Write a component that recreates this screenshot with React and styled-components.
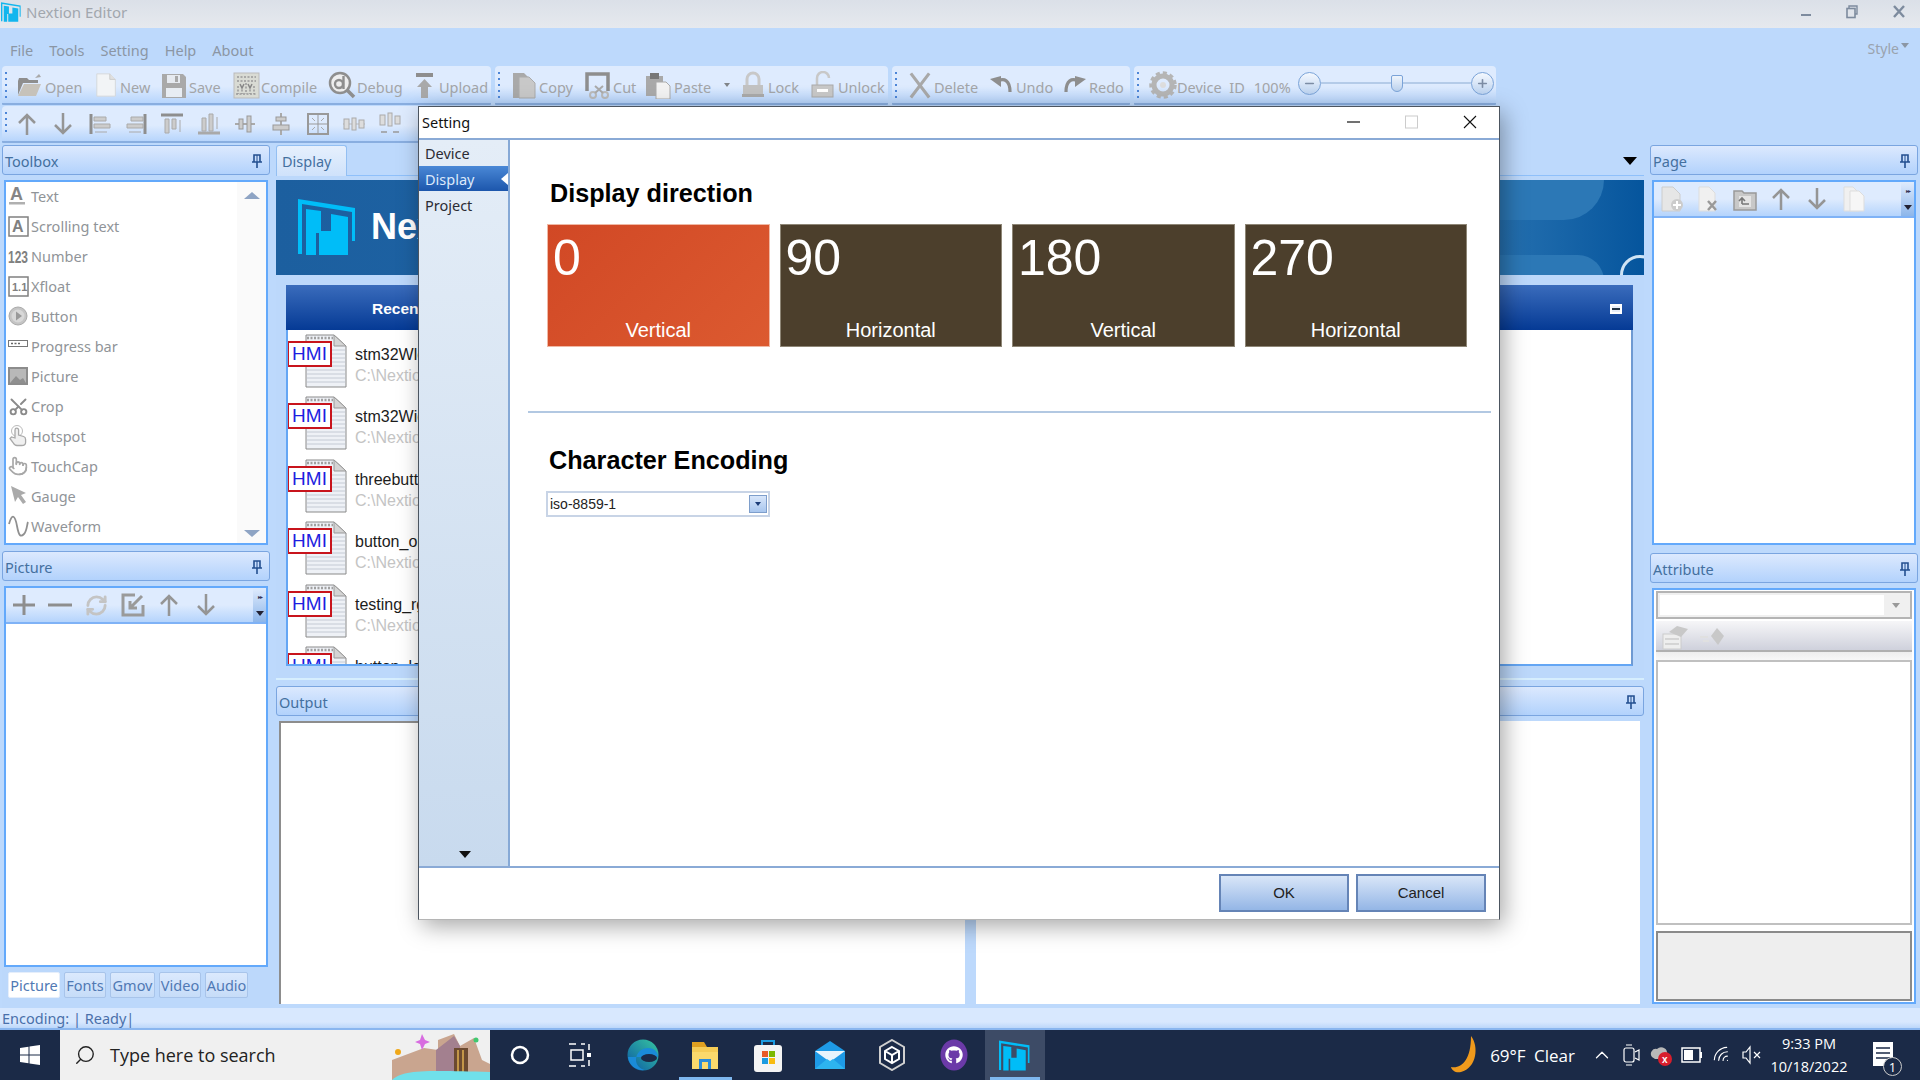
import React from 'react';
import styled, { createGlobalStyle } from 'styled-components';
import { Scissors, Pointer, RefreshCw, Minus, Plus, ChevronUp, Wifi, Search } from 'lucide-react';
import { FaGithub } from 'react-icons/fa';

const Global = createGlobalStyle`
  html, body { margin: 0; padding: 0; background: #bdd9fc; }
  * { box-sizing: border-box; }
`;

const UI = `"Noto Sans", "Liberation Sans", sans-serif`;
const ARIAL = `"Liberation Sans", Arial, sans-serif`;
const GREY = '#a3a5a8';

const Root = styled.div`
  position: relative; width: 1920px; height: 1080px; overflow: hidden;
  display: flex; flex-direction: column; background: #bdd9fc; font-family: ${UI};
`;
const TitleBar = styled.div`
  height: 28px; flex: none; display: flex; align-items: center; padding: 0 0 5px 1px;
  background: linear-gradient(#dbe0e8, #e6e9ee); color: #a2a7ae; font-size: 15px;
`;
const TitleText = styled.span` margin-left: 5px; flex: 1; `;
const WinControls = styled.div` display: flex; gap: 35px; padding-right: 15px; align-items: center; color: #7d8b9e; `;
const MenuBar = styled.div`
  height: 37px; flex: none; display: flex; align-items: center; padding: 6px 11px 0 10px; gap: 16px;
  color: #8b96a4; font-size: 14.5px;
`;
const StyleMenu = styled.span`
  margin-left: auto; margin-top: -2px; display: flex; gap: 2px; color: #9aa3ae; font-size: 14px;
  &::after { content: ''; margin-top: 4px; border: 4px solid transparent; border-top: 5px solid #8b96a4; border-bottom: 0; }
`;
const ToolRow = styled.div`
  height: ${p => p.$h}px; flex: none; display: flex; gap: 4px; padding: ${p => p.$pad} 0 0 2px;
`;
const Group = styled.div`
  width: ${p => p.$w}px; height: 100%; position: relative; display: flex; align-items: center;
  padding-left: ${p => p.$pl}px; border-radius: 4px 4px 1px 1px; border-bottom: 2px solid #89aee0;
  background: linear-gradient(#deebfe 0%, #deebfe 55%, #b7d5fc 100%);
  color: ${GREY}; font-size: 14.5px;
  &::before {
    content: ''; position: absolute; left: 3px; top: 6px; bottom: 5px; width: 2px;
    background: repeating-linear-gradient(#4d86d8 0 2px, transparent 2px 6px);
  }
`;
const ToolItem = styled.div`
  width: ${p => p.$w}px; flex: none; display: flex; align-items: center;
`;
const ToolIcon = styled.div` width: ${p => p.$w}px; flex: none; display: flex; `;
const ToolLabel = styled.span` margin-top: 4px; margin-left: ${p => p.$ml || 0}px; white-space: nowrap; `;
const Caret = styled.span`
  margin: 0 0 0 13px; border: 3.5px solid transparent; border-top: 4px solid #808488; border-bottom: 0;
`;
const SliderWrap = styled.div` display: flex; align-items: center; margin-left: 7px; width: 196px; margin-top: -3px; `;
const ZoomBtn = styled.div`
  width: 23px; height: 23px; flex: none; border-radius: 50%; border: 1.5px solid #7aa3d8;
  background: linear-gradient(#f4f8fe, #bcd3f0); color: #7c8ca4; display: flex; align-items: center; justify-content: center;
`;
const Track = styled.div` flex: 1; height: 2px; background: #b4cbe8; display: flex; justify-content: center; align-items: center; `;
const Thumb = styled.div`
  width: 12px; height: 17px; margin-left: 2px; background: linear-gradient(#eef4fc, #bcd2ee);
  border: 1.5px solid #7aa3d8; border-radius: 2px 2px 6px 6px;
`;
const RowIcon = styled.div` width: 36.3px; flex: none; display: flex; justify-content: center; `;

const Body = styled.div` height: 865px; flex: none; display: flex; padding: 2px 0 0 2px; `;
const LeftCol = styled.div` width: 268px; flex: none; display: flex; flex-direction: column; `;
const CenterCol = styled.div` width: 1368px; margin-left: 6px; flex: none; display: flex; flex-direction: column; `;
const RightCol = styled.div` width: 268px; margin-left: 6px; flex: none; display: flex; flex-direction: column; `;

const PaneHeader = styled.div`
  height: 30px; flex: none; display: flex; align-items: center; justify-content: space-between;
  padding: 2px 7px 0 2px; border: 1px solid #7aa5e0; border-radius: 3px; margin-top: ${p => p.$mt || 0}px;
  background: linear-gradient(#dce9fe, #b2d2fc); color: #44709f; font-size: 14.5px;
`;
const PanelBox = styled.div`
  height: ${p => p.$h}px; margin: ${p => p.$mt ?? 5}px 2px 0 2px; flex: none; background: #fff;
  border: 2px solid #63a9fb; display: flex; flex-direction: column; overflow: hidden; position: relative;
`;
const ToolList = styled.div` flex: 1; margin-top: -1px; `;
const ListRow = styled.div`
  height: 30px; display: flex; align-items: center; padding-left: 2px; color: #909498; font-size: 14.5px;
`;
const ListIcon = styled.div` width: 23px; flex: none; display: flex; `;
const ScrollRail = styled.div`
  position: absolute; right: 0; top: 0; bottom: 0; width: 29px; background: #fafafa;
  display: flex; flex-direction: column; justify-content: space-between; align-items: center; padding: 10px 0 6px;
`;
const ArrowUp = styled.span` border: 8px solid transparent; border-bottom: 7px solid #8ea4c4; border-top: 0; `;
const ArrowDown = styled.span` border: 8px solid transparent; border-top: 7px solid #8ea4c4; border-bottom: 0; `;
const PaneToolbar = styled.div`
  height: 36px; flex: none; display: flex; align-items: center; padding-left: ${p => p.$pl}px; position: relative;
  background: linear-gradient(#deebfe 0%, #deebfe 50%, #b5d4fc 100%);
  border-bottom: 2px solid #7fb2f6;
`;
const PaneTool = styled.div` width: 36.3px; flex: none; display: flex; justify-content: center; `;
const Overflow = styled.div`
  position: absolute; right: 0; top: 0; bottom: 0; width: 13px;
  background: linear-gradient(#dfebfd, #8db6ea); display: flex; flex-direction: column; align-items: center; justify-content: space-around;
  &::before { content: '▸▸'; font-size: 6px; color: #335; letter-spacing: -1px; line-height: 6px; }
  &::after { content: ''; border: 4px solid transparent; border-top: 5px solid #223; border-bottom: 0; }
`;
const TabBar = styled.div` flex: 1; display: flex; gap: 4px; padding: 5px 0 0 6px; background: #bcd8fb; `;
const BottomTab = styled.div`
  width: ${p => p.$w}px; height: 26px; display: flex; align-items: center; justify-content: center;
  background: ${p => (p.$on ? '#fff' : 'linear-gradient(#dbe9fd, #c6dcf8)')};
  border: 1px solid ${p => (p.$on ? '#e5eefb' : '#a8c4ea')}; border-radius: 2px; color: #5079b4; font-size: 14.5px;
`;

const TabStrip = styled.div` height: 31px; flex: none; display: flex; justify-content: space-between; border-bottom: 1px solid #8fc0fa; `;
const DocTab = styled.div`
  width: 71px; height: 31px; background: linear-gradient(#e6f0fd, #cfe2fb); border: 1px solid #93bff2;
  border-bottom: 0; border-radius: 3px 3px 0 0; color: #44709f; font-size: 14.5px; display: flex; align-items: center; padding-left: 5px;
`;
const StripArrow = styled.span`
  margin: 12px 7px 0 0; height: 0; border: 7px solid transparent; border-top: 8px solid #000; border-bottom: 0;
`;
const DocPanel = styled.div`
  height: 504px; flex: none; display: flex; flex-direction: column; padding-top: 4px;
  background: #bcd8fb; border-bottom: 2px solid #d6eefe;
`;
const Banner = styled.div`
  height: 95px; flex: none; position: relative; overflow: hidden; display: flex; align-items: center; padding: 0 0 2px 22px;
  background: linear-gradient(90deg, #1c5f9f 0%, #2068ab 50%, #2a74b2 88%, #05559d 100%);
`;
const BannerTitle = styled.span` margin-left: 15px; color: #fff; font: bold 36px ${ARIAL}; `;
const BannerWave = styled.div`
  position: absolute; right: 40px; top: -30px; width: 240px; height: 70px; border-radius: 0 0 40px 0; background: #2c78b6;
`;
const BannerWave2 = styled.div`
  position: absolute; right: 40px; bottom: -30px; width: 240px; height: 50px; border-radius: 0 26px 0 0; background: #2c78b6;
`;
const BannerArc = styled.div`
  position: absolute; right: -16px; bottom: -20px; width: 40px; height: 40px; border-radius: 50%; border: 3px solid #cfe4f5;
`;
const RecentPanel = styled.div`
  height: 381px; margin: 10px 11px 0 10px; flex: none; display: flex; flex-direction: column;
`;
const RecentHead = styled.div`
  height: 45px; flex: none; display: flex; align-items: center; justify-content: space-between; padding: 2px 11px 0 86px;
  background: linear-gradient(#3a6cbc, #053a95); color: #fff; font: bold 15.5px ${ARIAL};
`;
const Collapse = styled.span`
  width: 12px; height: 10px; background: #e8eef8; border: 2px solid #fff;
  display: flex; align-items: center;
  &::after { content: ''; width: 100%; height: 2px; background: #234; }
`;
const RecentList = styled.div`
  flex: 1; background: #fff; overflow: hidden; border: 2px solid #64a6f4; border-top: 0; border-right-color: #6f9ad2;
`;
const FileRow = styled.div` height: 62.4px; display: flex; padding: 4px 0 0 0; position: relative; `;
const DocWrap = styled.span` margin-left: 17px; display: flex; `;
const HmiBadge = styled.span`
  position: absolute; left: -1px; top: 11px; width: 45px; height: 26px; background: #fff; border: 2.5px solid #c8141c;
  color: #1e1ee0; font: 19px ${ARIAL}; display: flex; align-items: center; justify-content: center;
`;
const FileText = styled.div` margin-left: 8px; display: flex; flex-direction: column; gap: 3px; padding-top: 12px; font: 16px ${ARIAL}; white-space: nowrap; `;
const FileName = styled.span` color: #1c1c1c; `;
const FilePath = styled.span` color: #c4c4c4; `;
const OutputBoxes = styled.div` height: 283px; margin: 5px 0 0 3px; flex: none; display: flex; gap: 11px; `;
const OutputBox = styled.div`
  width: ${p => p.$w}px; background: #fff; border: solid #8d8d8d; border-width: ${p => (p.$first ? '2px 0 0 2px' : '0')};
`;
const Combo = styled.div`
  height: 28px; margin: 1px 2px 0; flex: none; border: 2px solid #b4b4b4; background: #f0f0f0; display: flex; align-items: center; padding: 2px;
`;
const ComboField = styled.div` flex: 1; height: 100%; background: #fff; `;
const ComboBtn = styled.div`
  width: 24px; display: flex; justify-content: center;
  &::after { content: ''; border: 4px solid transparent; border-top: 5px solid #999; border-bottom: 0; }
`;
const GreyBar = styled.div`
  height: 31px; margin: 2px 2px 0; flex: none; display: flex; align-items: center; gap: 8px; padding: 3px 0 0 5px;
  background: linear-gradient(#f6f6f8, #cfd1dc); border-bottom: 2px solid #b0b0b0;
`;
const GreyBand = styled.div` height: 8px; flex: none; margin: 0 2px; background: linear-gradient(#eee, #f8f8f8); `;
const PropBox = styled.div` height: 265px; margin: 0 2px; flex: none; background: #fff; border: 2px solid #c0c0c0; `;
const DescBox = styled.div` flex: 1; margin: 6px 2px 1px; background: #eee; border: 2px solid #8a8a8a; `;
const StatusBar = styled.div`
  height: 22px; flex: none; display: flex; align-items: center; padding-left: 2px; color: #4a70aa; font-size: 14.5px;
  background: linear-gradient(#d8e8fe, #d8e8fe 70%, #bcd7fa); border-bottom: 2px solid #8ab6ef;
`;

const Taskbar = styled.div`
  flex: 1; display: flex; align-items: stretch; background: #1b2a47; color: #fff; font-family: "Open Sans", ${UI};
`;
const StartBtn = styled.div` width: 60px; display: flex; align-items: center; justify-content: center; `;
const SearchBox = styled.div`
  width: 430px; display: flex; align-items: center; padding-left: 14px; background: #f0f0f0; color: #222; font-size: 18px; position: relative; overflow: hidden;
`;
const SearchText = styled.span` margin-left: 14px; `;
const SearchArt = styled.div` position: absolute; right: 0; top: 0; bottom: 0; width: 98px; display: flex; `;
const TaskIcon = styled.div`
  width: ${p => p.$w}px; flex: none; display: flex; align-items: center; justify-content: center; position: relative;
  background: ${p => (p.$active ? '#3d4b66' : 'transparent')};
  ${p => p.$underline && `&::after { content:''; position:absolute; left:5px; right:5px; bottom:0; height:3px; background:#7fb8ef; }`}
`;
const TaskIcons = styled.div` display: flex; `;
const Tray = styled.div` margin-left: auto; display: flex; align-items: center; `;
const Weather = styled.span` margin: 0 12px 0 9px; font-size: 17px; word-spacing: 4px; white-space: nowrap; `;
const TrayIcon = styled.div` width: 30px; flex: none; display: flex; justify-content: center; align-items: center; `;
const Clock = styled.div` width: 84px; display: flex; flex-direction: column; align-items: center; gap: 4px; font-size: 14.5px; line-height: 19px; `;
const Notify = styled.div` width: 46px; margin-left: 9px; margin-right: 14px; display: flex; justify-content: center; position: relative; `;
const NotifyCount = styled.span`
  position: absolute; right: 4px; bottom: -8px; width: 19px; height: 19px; border-radius: 50%; background: #1b2a47; border: 1px solid #ccc;
  font-size: 13px; display: flex; align-items: center; justify-content: center;
`;

const Dialog = styled.div`
  position: absolute; left: 418px; top: 106px; width: 1082px; height: 814px; background: #fff;
  border: 1px solid #4c5560; border-bottom-color: #b5b5b5; box-shadow: 4px 6px 22px rgba(0,0,0,.35); display: flex; flex-direction: column;
  font-family: ${ARIAL};
`;
const DlgTitle = styled.div`
  height: 33px; flex: none; display: flex; align-items: center; justify-content: space-between; padding: 0 22px 2px 3px;
  border-bottom: 2px solid #8aaad6; font: 14.5px ${UI}; color: #111;
`;
const DlgBtns = styled.div` display: flex; align-items: center; gap: 45px; color: #111; `;
const DlgMain = styled.div` flex: 1; display: flex; min-height: 0; `;
const Nav = styled.nav`
  width: 91px; flex: none; display: flex; flex-direction: column; position: relative;
  background: linear-gradient(#e4edf7, #c8daee); border-right: 2px solid #86a9d6; font: 14.5px ${UI}; color: #2c2c34;
`;
const NavItem = styled.div`
  height: ${p => p.$h}px; display: flex; align-items: center; padding-left: 6px; position: relative;
  ${p => p.$on && `
    color: #dce9fb; background: linear-gradient(#4a88d6, #1c56ac);
    &::after { content:''; position:absolute; right:0; top:7px; border: 6px solid transparent; border-right: 7px solid #fff; border-left: 0; }
  `}
`;
const NavMore = styled.span`
  position: absolute; left: 40px; bottom: 8px; border: 6px solid transparent; border-top: 7px solid #111; border-bottom: 0;
`;
const DlgContent = styled.div` flex: 1; display: flex; flex-direction: column; padding: 0 8px 0 18px; `;
const Heading = styled.h2`
  margin: ${p => p.$mt}px 0 0 ${p => p.$ml}px; font: bold 25.2px/32px ${ARIAL}; color: #000;
`;
const Tiles = styled.div` display: flex; gap: 10px; margin: 15px 0 0 19px; `;
const Tile = styled.div`
  width: 222.5px; height: 123px; display: flex; flex-direction: column; justify-content: space-between; color: #fff;
  padding: 5px 0 3px 0;
  background: ${p => (p.$on ? 'linear-gradient(135deg, #d14825, #dc5a30)' : '#4c3f2c')};
  border: 1px solid ${p => (p.$on ? '#f0b8a4' : '#8e8676')};
`;
const TileNum = styled.span` font: 50px/56px ${ARIAL}; padding-left: 5px; `;
const TileLabel = styled.span` font: 20px/26px ${ARIAL}; text-align: center; `;
const Divider = styled.div` height: 2px; margin: 64px 0 0 0; background: #b2c8e2; `;
const Select = styled.div`
  width: 224px; height: 26px; margin: 15px 0 0 18px; display: flex; align-items: center; justify-content: space-between;
  border: 2px solid #c8d4e6; padding-left: 2px; color: #222; font: 14px ${ARIAL}; background: #fff;
`;
const SelectBtn = styled.span`
  width: 18px; height: 18px; margin-right: 1px; background: linear-gradient(#d8e6fa, #a8c6ee); border: 1px solid #7e9ecb;
  display: flex; align-items: center; justify-content: center;
  &::after { content:''; border: 3.5px solid transparent; border-top: 4px solid #1c3c78; border-bottom: 0; }
`;
const DlgFooter = styled.div`
  height: 53px; flex: none; display: flex; justify-content: flex-end; align-items: center; gap: 7px; padding: 0 13px 2px 0;
  border-top: 2px solid #8aaad6; background: #fff;
`;
const DlgButton = styled.div`
  width: 130px; height: 38px; display: flex; align-items: center; justify-content: center; color: #222; font: 15px ${ARIAL};
  background: linear-gradient(#d9e6f8, #94b6e6); border: 2px solid #6584b6;
`;

/* ---------- drawings ---------- */
const Svg = ({ s = 28, w, h, children, vb }) => (
  <svg width={w || s} height={h || s} viewBox={vb || `0 0 ${w || s} ${h || s}`} fill="none">{children}</svg>
);
const g = '#a9a9a9';
const d = '#8e8e8e';

const tb = {
  open: <Svg><path d="M3 10l1-3h8l2 2h9v3H8L3 24z" fill={d}/><path d="M3 25l6-12h17l-5 12z" fill="#c6c2ba"/><path d="M20 7l4-4 2 3z" fill={g}/></Svg>,
  new: <Svg><path d="M3 2h14l6 6v18H3z" fill="#f2f4f6" stroke="#d4d7da"/><path d="M17 2v6h6" stroke="#ccc" fill="#e0e0e0"/></Svg>,
  save: <Svg><path d="M2 3h21l3 3v21H2z" fill={g}/><rect x="7" y="4" width="13" height="8" fill="#e6eaf0"/><rect x="15" y="5" width="3" height="6" fill={g}/><rect x="6" y="17" width="16" height="9" fill="#e8edf3"/></Svg>,
  compile: <Svg><rect x="2" y="2" width="25" height="25" fill="#d9dbd4" stroke="#bbb"/><path d="M5 6h19M5 10h19M6 15v8M10 15v8M14 12v11M18 15v8M22 15v8M4 23h21" stroke="#999" strokeDasharray="2 1.5" strokeWidth="1.5"/><path d="M8 13l2 4 2-4M16 13l2 4 2-4" stroke="#888" strokeWidth="1.5"/></Svg>,
  debug: <Svg><circle cx="12" cy="12" r="10" fill="#eee" stroke={d} strokeWidth="2.5"/><circle cx="11" cy="13" r="4" stroke={d} strokeWidth="2.4"/><path d="M15.5 5v13" stroke={d} strokeWidth="2.4"/><path d="M19 19l7 7" stroke={d} strokeWidth="3.5"/></Svg>,
  upload: <Svg w={22} h={28}><rect x="1" y="2" width="17" height="4" fill={d}/><path d="M9.5 8L2 16h4v11h7V16h4z" fill={g}/></Svg>,
  copy: <Svg><path d="M2 2h11l4 4v21H2z" fill={g}/><path d="M8 6h10l6 6v15H8z" fill="#c8c8c8" stroke="#aaa"/></Svg>,
  cut: <Svg><path d="M3 20V3h21v17" stroke={d} strokeWidth="3.5"/><circle cx="9" cy="24" r="3" stroke="#bbb" strokeWidth="2"/><circle cx="21" cy="24" r="3" stroke="#bbb" strokeWidth="2"/><path d="M11 22l8-7M19 22l-8-7" stroke="#aaa" strokeWidth="2"/></Svg>,
  paste: <Svg><rect x="1" y="5" width="17" height="20" fill={g}/><rect x="5" y="2" width="9" height="6" fill="#777"/><path d="M11 11h10l4 4v13H11z" fill="#f2f2f2" stroke="#aaa"/></Svg>,
  lock: <Svg><path d="M7 14V8a6 6 0 0 1 12 0v6" stroke="#c8c8c8" strokeWidth="3"/><rect x="3" y="14" width="20" height="10" fill="#c2c2c2"/><rect x="2" y="23" width="22" height="3" fill="#aaa"/></Svg>,
  unlock: <Svg><path d="M7 14V7a6 6 0 0 1 12 0" stroke="#c8c8c8" strokeWidth="2.5"/><rect x="2" y="14" width="21" height="12" fill="#c8c8c8" stroke="#aaa"/><rect x="7" y="18" width="11" height="3" fill="#fff"/></Svg>,
  del: <Svg><path d="M4 2l19 25M23 2L4 27" stroke="#a8a8a8" strokeWidth="3.2"/></Svg>,
  undo: <Svg w={24} h={24}><path d="M9 8c6-3 12-1 12 11" stroke={d} strokeWidth="3.2"/><path d="M1 6l11-3v11z" fill={d}/></Svg>,
  redo: <Svg w={24} h={24}><path d="M15 8C9 5 3 7 3 19" stroke={d} strokeWidth="3.2"/><path d="M23 6L12 3v11z" fill={d}/></Svg>,
  gear: <Svg><circle cx="14" cy="14" r="9" stroke="#b5b5b5" strokeWidth="5"/><circle cx="14" cy="14" r="12" stroke="#b5b5b5" strokeWidth="3.5" strokeDasharray="4 3"/><circle cx="14" cy="14" r="3" fill="#ddd"/></Svg>,
};

const arrowUp = <Svg w={24} h={24}><path d="M12 23V3M4 11l8-8 8 8" stroke="#959595" strokeWidth="2.5"/></Svg>;
const arrowDown = <Svg w={24} h={24}><path d="M12 1v20M4 13l8 8 8-8" stroke="#959595" strokeWidth="2.5"/></Svg>;
const row2 = [
  arrowUp, arrowDown,
  <Svg w={24} h={24} key="a"><path d="M3 2v20" stroke={d} strokeWidth="3"/><path d="M6 5h12v4H6zM6 12h16v4H6z" fill="#ccc" stroke="#aaa"/><path d="M7 20h12" stroke="#aaa"/></Svg>,
  <Svg w={24} h={24} key="b"><path d="M21 2v20" stroke={d} strokeWidth="3"/><path d="M7 5h12v4H7zM3 12h16v4H3z" fill="#ccc" stroke="#aaa"/><path d="M5 20h12" stroke="#aaa"/></Svg>,
  <Svg w={24} h={24} key="c"><path d="M1 3h22" stroke={d} strokeWidth="3"/><path d="M5 7h4v14H5zM12 7h4v10h-4z" fill="#ccc" stroke="#aaa"/><path d="M20 8v12" stroke="#aaa"/></Svg>,
  <Svg w={24} h={24} key="d"><path d="M1 21h22" stroke={g} strokeWidth="3"/><path d="M5 6h4v13H5zM12 2h4v17h-4z" fill="#ccc" stroke="#aaa"/><path d="M20 5v12" stroke="#aaa"/></Svg>,
  <Svg w={24} h={24} key="e"><path d="M2 12h20" stroke="#aaa" strokeWidth="2"/><rect x="6" y="7" width="4" height="10" fill="#ccc" stroke="#999"/><rect x="14" y="4" width="4" height="16" fill="#ccc" stroke="#999"/></Svg>,
  <Svg w={24} h={24} key="f"><path d="M12 1v22" stroke="#aaa" strokeWidth="2"/><rect x="7" y="5" width="10" height="4" fill="#ccc" stroke="#999"/><rect x="4" y="13" width="16" height="5" fill="#ccc" stroke="#999"/></Svg>,
  <Svg w={24} h={24} key="g"><rect x="2" y="2" width="20" height="20" stroke="#999" strokeWidth="2"/><path d="M12 2v20M2 12h20" stroke="#999"/><path d="M6 6l3 3M18 6l-3 3M6 18l3-3M18 18l-3-3" stroke="#aaa"/></Svg>,
  <Svg w={24} h={24} key="h"><path d="M1 12h22" stroke="#bbb"/><rect x="2" y="7" width="5" height="10" fill="#ddd" stroke="#aaa"/><rect x="10" y="6" width="4" height="12" fill="#ddd" stroke="#aaa"/><rect x="17" y="8" width="5" height="8" fill="#ddd" stroke="#aaa"/></Svg>,
  <Svg w={24} h={24} key="i"><rect x="2" y="3" width="5" height="10" fill="#ddd" stroke="#aaa"/><rect x="10" y="1" width="4" height="13" fill="#ddd" stroke="#aaa"/><rect x="17" y="4" width="5" height="8" fill="#ddd" stroke="#aaa"/><path d="M3 20h6M15 20h6" stroke="#999" strokeWidth="1.5"/></Svg>,
];

const side = {
  text: <Svg w={20} h={22}><text x="2" y="15" fontFamily={ARIAL} fontWeight="bold" fontSize="18" fill="#858585">A</text><rect x="1" y="17" width="16" height="2.5" fill="#b0b0b0"/></Svg>,
  scroll: <Svg w={21} h={21}><rect x="1" y="1" width="19" height="19" stroke="#808080" strokeWidth="1.5"/><text x="4" y="16" fontFamily={ARIAL} fontWeight="bold" fontSize="16" fill="#808080">A</text></Svg>,
  num: <Svg w={21} h={22}><text x="0" y="13.5" transform="scale(1 1.35)" fontFamily={ARIAL} fontSize="12" fontWeight="bold" fill="#808080">123</text></Svg>,
  xfloat: <Svg w={21} h={21}><rect x="1" y="1" width="19" height="19" stroke="#808080" strokeWidth="1.5"/><text x="4" y="15" fontFamily={ARIAL} fontWeight="bold" fontSize="11" fill="#808080">1.1</text></Svg>,
  button: <Svg w={20} h={20}><circle cx="10" cy="10" r="9" fill="#c4c4c4" stroke="#aaa"/><circle cx="10" cy="10" r="6.5" fill="#d8d8d8"/><path d="M8 5.5l6 4.5-6 4.5z" fill="#999"/></Svg>,
  progress: <Svg w={20} h={20}><rect x=".5" y="4.5" width="19" height="6" fill="#fff" stroke="#777"/><path d="M3 7.5h9" stroke="#666" strokeWidth="1.5" strokeDasharray="2 1.5"/></Svg>,
  picture: <Svg w={20} h={20}><rect x="0" y="1" width="20" height="18" fill="#8c8c8c"/><rect x="2" y="3" width="16" height="14" fill="#b8b8b8"/><path d="M2 17l6-7 4 4 3-2 3 5z" fill="#8f8f8f"/></Svg>,
  hot: <Svg w={20} h={24}><circle cx="9" cy="7" r="5.5" stroke="#bbb"/><path d="M7 14V6a1.8 1.8 0 0 1 3.6 0v5l5 1.5c1.5.5 2 1.5 2 3v3c0 2-2 3-4 3H9c-2 0-3-1-4-3l-3-4 1.5-1.5z" fill="#f0f0f0" stroke="#a8a8a8" strokeWidth="1.3"/></Svg>,
  gauge: <Svg w={20} h={22}><path d="M3 1l4 16 3-5 5 7 3-2-5-7 5-2z" fill="#aaa"/></Svg>,
  wave: <Svg w={21} h={22}><path d="M1 9c3-11 6-9 8 2s4 11 7 8 3-10 4-12" stroke="#909090" strokeWidth="1.8"/></Svg>,
};

const PinIcon = () => <Svg w={10} h={14}><path d="M2 1h6v7H2zM0 8h10M5 8v6" stroke="#234f90" strokeWidth="1.6"/><path d="M5 1v7" stroke="#234f90"/></Svg>;

const NextionLogo = ({ w, h, c = '#00bdf8' }) => (
  <svg width={w} height={h} viewBox="0 0 58 56">
    <path d="M0 0l57 9v33h-3V13L4 5v50H0z" fill={c}/>
    <path d="M8 10l15 2v20h10V15l17 3v38H21V34h-3v22H8z" fill={c}/>
    <path d="M23 34h10v5H23z" fill={c}/>
  </svg>
);

const paneIcon = {
  plus: <Svg w={24} h={24}><path d="M12 2v20M1 12h22" stroke="#8e8e8e" strokeWidth="3"/></Svg>,
  minus: <Svg w={24} h={24}><path d="M0 12h24" stroke="#8e8e8e" strokeWidth="3"/></Svg>,
  refresh: <RefreshCw size={23} color="#c4c4c4" strokeWidth={3}/>,
  edit: <Svg w={24} h={24}><path d="M14 2H2v20h20V12" stroke="#9a9a9a" strokeWidth="3"/><path d="M21 3L9 15M9 8v7h7" stroke="#9a9a9a" strokeWidth="3"/></Svg>,
  pgNew: <Svg w={24} h={28}><path d="M2 2h11l7 7v17H2z" fill="#e6e6e6" stroke="#ccc"/><circle cx="17" cy="20" r="6" fill="#ccc"/><path d="M17 16v8M13 20h8" stroke="#fff" strokeWidth="2"/></Svg>,
  pgDel: <Svg w={24} h={28}><path d="M3 2h10l6 6v18H3z" fill="#f0f0f0" stroke="#ddd"/><path d="M12 16l8 9M20 16l-8 9" stroke="#999" strokeWidth="2.5"/></Svg>,
  pgUp: <Svg w={24} h={24}><path d="M1 4h8l2 2h12v17H1z" fill="#c8c8c8" stroke="#999" strokeWidth="1.5"/><path d="M6 9h12v11H6" fill="#e4e4e4"/><path d="M16 17H9m0 0V11m-3 3l3-3 3 3" stroke="#777" strokeWidth="1.6"/></Svg>,
  pgCopy: <Svg w={24} h={28}><path d="M2 2h9l6 6v18H2z" fill="#f0f0f0" stroke="#ddd"/><path d="M8 6h9l5 5v15H8z" fill="#f6f6f6" stroke="#ddd"/></Svg>,
};

const hmiDoc = (
  <Svg w={42} h={54}>
    <path d="M1 1h28l12 11v41H1z" fill="#eef1f6" stroke="#8a8a8a"/>
    <path d="M2 4h26" stroke="#a0a0a0" strokeDasharray="2 1.5" strokeWidth="2.5"/>
    <path d="M29 1v11h12z" fill="#d4d4d4" stroke="#999"/>
    <path d="M2 16h38M2 20h38M2 24h38M2 28h38M2 32h38M2 36h38M2 40h38M2 44h38M2 48h38" stroke="#c4cad4"/>
  </Svg>
);

const items1 = [
  [['open', 'Open', 79, 30], ['new', 'New', 66, 26], ['save', 'Save', 72, 29], ['compile', 'Compile', 96, 29], ['debug', 'Debug', 87, 29], ['upload', 'Upload', 72, 24]],
  [['copy', 'Copy', 73, 28], ['cut', 'Cut', 61, 29], ['paste', 'Paste', 95, 29, true], ['lock', 'Lock', 70, 28], ['unlock', 'Unlock', 70, 28]],
  [['del', 'Delete', 82, 27], ['undo', 'Undo', 74, 27], ['redo', 'Redo', 60, 26]],
];
const groupDefs = [[489, 13], [393, 16], [238, 15]];

const toolboxItems = [
  [side.text, 'Text'], [side.scroll, 'Scrolling text'], [side.num, 'Number'], [side.xfloat, 'Xfloat'],
  [side.button, 'Button'], [side.progress, 'Progress bar'], [side.picture, 'Picture'],
  [<Scissors key="s" size={21} color="#8a8a8a" strokeWidth={2.2} style={{ transform: 'rotate(-90deg)' }}/>, 'Crop'],
  [side.hot, 'Hotspot'], [<Pointer key="p" size={20} color="#a8a8a8"/>, 'TouchCap'],
  [side.gauge, 'Gauge'], [side.wave, 'Waveform'],
];
const files = [
  ['stm32WleSeries', 'C:\\Nextion\\stm32WleSeries'], ['stm32WioBoard', 'C:\\Nextion\\stm32WioBoard'], ['threebutton', 'C:\\Nextion\\threebutton'],
  ['button_on', 'C:\\Nextion\\button_on'], ['testing_rgb', 'C:\\Nextion\\testing_rgb'], ['button_led', 'C:\\Nextion\\button_led'],
];
const tiles = [['0', 'Vertical', true], ['90', 'Horizontal'], ['180', 'Vertical'], ['270', 'Horizontal']];

export default function App() {
  return (
    <Root>
      <Global />
      <TitleBar>
        <NextionLogo w={20} h={24} c="#12b6ee" />
        <TitleText>Nextion Editor</TitleText>
        <WinControls>
          <Svg w={10} h={14}><path d="M0 10h10" stroke="#7d8b9e" strokeWidth="2"/></Svg>
          <Svg w={12} h={14}><path d="M3 3V1h8v8H9" stroke="#7d8b9e" strokeWidth="1.4"/><rect x="1" y="3.5" width="8" height="9" stroke="#7d8b9e" strokeWidth="1.6"/></Svg>
          <Svg w={12} h={14}><path d="M1 1l10 11M11 1L1 12" stroke="#7d8b9e" strokeWidth="2.4"/></Svg>
        </WinControls>
      </TitleBar>
      <MenuBar>
        <span>File</span><span>Tools</span><span>Setting</span><span>Help</span><span>About</span>
        <StyleMenu>Style</StyleMenu>
      </MenuBar>
      <ToolRow $h={40} $pad="1px">
        {items1.map((group, i) => (
          <Group key={i} $w={groupDefs[i][0]} $pl={groupDefs[i][1]}>
            {group.map(([ic, label, w, iw, caret]) => (
              <ToolItem key={label} $w={w}>
                <ToolIcon $w={iw}>{tb[ic]}</ToolIcon>
                <ToolLabel>{label}</ToolLabel>
                {caret && <Caret />}
              </ToolItem>
            ))}
          </Group>
        ))}
        <Group $w={362} $pl={15}>
          <ToolIcon $w={28}>{tb.gear}</ToolIcon>
          <ToolLabel>Device&nbsp; ID</ToolLabel>
          <ToolLabel $ml={9}>100%</ToolLabel>
          <SliderWrap>
            <ZoomBtn><Minus size={13} strokeWidth={3}/></ZoomBtn>
            <Track><Thumb /></Track>
            <ZoomBtn><Plus size={13} strokeWidth={3}/></ZoomBtn>
          </SliderWrap>
        </Group>
      </ToolRow>
      <ToolRow $h={38} $pad="1px">
        <Group $w={500} $pl={7}>
          {row2.map((ic, i) => <RowIcon key={i}>{ic}</RowIcon>)}
        </Group>
      </ToolRow>

      <Body>
        <LeftCol>
          <PaneHeader>Toolbox<PinIcon /></PaneHeader>
          <PanelBox $h={365}>
            <ToolList>
              {toolboxItems.map(([ic, label]) => (
                <ListRow key={label}><ListIcon>{ic}</ListIcon><span>{label}</span></ListRow>
              ))}
            </ToolList>
            <ScrollRail><ArrowUp /><ArrowDown /></ScrollRail>
          </PanelBox>
          <PaneHeader $mt={6}>Picture<PinIcon /></PaneHeader>
          <PanelBox $h={381}>
            <PaneToolbar $pl={0}>
              <PaneTool>{paneIcon.plus}</PaneTool><PaneTool>{paneIcon.minus}</PaneTool><PaneTool>{paneIcon.refresh}</PaneTool>
              <PaneTool>{paneIcon.edit}</PaneTool><PaneTool>{arrowUp}</PaneTool><PaneTool>{arrowDown}</PaneTool>
              <Overflow />
            </PaneToolbar>
          </PanelBox>
          <TabBar>
            <BottomTab $w={52} $on>Picture</BottomTab><BottomTab $w={42}>Fonts</BottomTab><BottomTab $w={45}>Gmov</BottomTab>
            <BottomTab $w={42}>Video</BottomTab><BottomTab $w={43}>Audio</BottomTab>
          </TabBar>
        </LeftCol>

        <CenterCol>
          <TabStrip><DocTab>Display</DocTab><StripArrow /></TabStrip>
          <DocPanel>
            <Banner>
              <BannerWave /><BannerWave2 /><BannerArc />
              <NextionLogo w={58} h={56} />
              <BannerTitle>Nextion</BannerTitle>
            </Banner>
            <RecentPanel>
              <RecentHead>Recent<Collapse /></RecentHead>
              <RecentList>
                {files.map(([name, path]) => (
                  <FileRow key={name}>
                    <DocWrap>{hmiDoc}</DocWrap>
                    <HmiBadge>HMI</HmiBadge>
                    <FileText><FileName>{name}</FileName><FilePath>{path}</FilePath></FileText>
                  </FileRow>
                ))}
              </RecentList>
            </RecentPanel>
          </DocPanel>
          <PaneHeader $mt={6}>Output<PinIcon /></PaneHeader>
          <OutputBoxes>
            <OutputBox $w={686} $first /><OutputBox $w={664} />
          </OutputBoxes>
        </CenterCol>

        <RightCol>
          <PaneHeader>Page<PinIcon /></PaneHeader>
          <PanelBox $h={365}>
            <PaneToolbar $pl={0}>
              <PaneTool>{paneIcon.pgNew}</PaneTool><PaneTool>{paneIcon.pgDel}</PaneTool><PaneTool>{paneIcon.pgUp}</PaneTool>
              <PaneTool>{arrowUp}</PaneTool><PaneTool>{arrowDown}</PaneTool><PaneTool>{paneIcon.pgCopy}</PaneTool>
              <Overflow />
            </PaneToolbar>
          </PanelBox>
          <PaneHeader $mt={8}>Attribute<PinIcon /></PaneHeader>
          <PanelBox $h={416}>
            <Combo><ComboField /><ComboBtn /></Combo>
            <GreyBar>
              <Svg w={28} h={26}><rect x="2" y="10" width="18" height="15" fill="#eee" stroke="#ccc"/><path d="M4 15h14M4 20h14" stroke="#bbb"/><path d="M8 8l8-6 11 3-7 8z" fill="#c8c8c8"/></Svg>
              <Svg w={28} h={24}><path d="M20 3l7 8-6 9-7-9z" fill="#c8c8c8"/><path d="M3 12h8M6 16h6" stroke="#e0e0e0" strokeWidth="2"/></Svg>
            </GreyBar>
            <GreyBand />
            <PropBox />
            <DescBox />
          </PanelBox>
        </RightCol>
      </Body>

      <StatusBar>Encoding: | Ready|</StatusBar>

      <Taskbar>
        <StartBtn>
          <Svg w={20} h={20}><path d="M0 3l8.5-1.2V9.5H0zM9.5 1.6L20 0v9.5H9.5zM0 10.5h8.5v7.7L0 17zM9.5 10.5H20V20l-10.5-1.6z" fill="#fff"/></Svg>
        </StartBtn>
        <SearchBox>
          <Search size={22} color="#222" strokeWidth={1.5} style={{ transform: 'scaleX(-1)' }}/>
          <SearchText>Type here to search</SearchText>
          <SearchArt>
            <svg width="98" height="50" viewBox="0 0 98 50">
              <path d="M0 30l32-12 14 2V10l16-6 6 12 14-8 8 22 8 4v16H0z" fill="#c9a58f"/>
              <path d="M44 20l18-14 6 10v34H44z" fill="#a3808f"/>
              <path d="M62 18h14v28H62z" fill="#6c4a30"/>
              <path d="M66 20v26M71 20v26" stroke="#e0b050" strokeWidth="1.5"/>
              <path d="M0 50c10-10 30-10 98-8v8z" fill="#70e0ea"/>
              <circle cx="6" cy="22" r="3" fill="#f0a818"/>
              <path d="M30 4l3 6 5 2-5 2-3 6-2-6-5-2 5-2z" fill="#d86ce0"/>
              <circle cx="84" cy="10" r="2.5" fill="#40c870"/>
            </svg>
          </SearchArt>
        </SearchBox>
        <TaskIcons>
          <TaskIcon $w={59}><Svg w={20} h={20}><circle cx="10" cy="10" r="8" stroke="#fff" strokeWidth="2.5"/></Svg></TaskIcon>
          <TaskIcon $w={62}><Svg w={22} h={26}><path d="M0 2h7M12 2h4M0 24h7M12 24h4" stroke="#fff" strokeWidth="1.5"/><rect x="2" y="8" width="12" height="10" stroke="#fff" strokeWidth="1.5"/><path d="M20 2v6M20 18v6" stroke="#fff" strokeWidth="1.5"/><rect x="18" y="11" width="4" height="4" fill="#fff"/></Svg></TaskIcon>
          <TaskIcon $w={63}>
            <svg width="32" height="32" viewBox="0 0 32 32">
              <defs><linearGradient id="ed" x1="0" y1="1" x2="1" y2="0"><stop offset="0" stopColor="#0c59a4"/><stop offset="1" stopColor="#36c6a0"/></linearGradient></defs>
              <circle cx="16" cy="16" r="15.5" fill="url(#ed)"/>
              <path d="M31 18c0-6-5-9-10-9-7 0-12 5-12 12 0 5 4 9 9 10-7 1-16-3-17-13" fill="#1a8bd8"/>
              <ellipse cx="22" cy="19" rx="8" ry="4" fill="#1b2a47"/>
            </svg>
          </TaskIcon>
          <TaskIcon $w={62.5} $underline>
            <svg width="28" height="30" viewBox="0 0 28 30">
              <path d="M1 2h12v5h14v22H1z" fill="#f6cc56"/><path d="M1 2h12l3 5H1z" fill="#e0a020"/>
              <path d="M1 12h26v17H1z" fill="#fbd96c"/><path d="M8 29V19h12v10h-3v-7h-6v7z" fill="#2c8bd8"/>
            </svg>
          </TaskIcon>
          <TaskIcon $w={62.5}>
            <svg width="28" height="34" viewBox="0 0 28 34">
              <path d="M8 8V3h12v5" stroke="#1c9be0" strokeWidth="2" fill="none"/>
              <rect x="0" y="7" width="28" height="27" rx="3" fill="#f4f4f4"/>
              <rect x="8" y="13" width="6" height="6" fill="#e85c28"/><rect x="15" y="13" width="6" height="6" fill="#7cb800"/>
              <rect x="8" y="20" width="6" height="6" fill="#1c9be0"/><rect x="15" y="20" width="6" height="6" fill="#f8bb10"/>
            </svg>
          </TaskIcon>
          <TaskIcon $w={62}>
            <svg width="30" height="28" viewBox="0 0 30 28">
              <path d="M0 10L15 0l15 10v18H0z" fill="#1e9ae6"/>
              <path d="M0 10l15 11 15-11H0z" fill="#e8f4fc"/>
              <path d="M0 28l12-10 3 2 3-2 12 10z" fill="#2db4f0"/>
            </svg>
          </TaskIcon>
          <TaskIcon $w={62}>
            <svg width="28" height="32" viewBox="0 0 28 32" fill="none" stroke="#fff" strokeWidth="2">
              <path d="M14 1L26 8v16l-12 7L2 24V8z" stroke="#d0d0d0"/>
              <path d="M14 8l7 4v8l-7 4-7-4v-8zM7 12l7 4 7-4M14 16v8"/>
            </svg>
          </TaskIcon>
          <TaskIcon $w={61.5}>
            <svg width="28" height="32" viewBox="0 0 28 32"><ellipse cx="14" cy="16" rx="13.5" ry="15.5" fill="#6b3aa8"/><foreignObject x="5" y="7" width="18" height="18"><FaGithub size={18} color="#fff"/></foreignObject></svg>
          </TaskIcon>
          <TaskIcon $w={60} $active $underline><NextionLogo w={31} h={33} /></TaskIcon>
        </TaskIcons>
        <Tray>
          <svg width="30" height="40" viewBox="0 0 30 40"><path d="M20 1c8 10 6 32-10 36C5 38 1 36 0 32c10 2 20-6 20-31z" fill="#f09a1c"/></svg>
          <Weather>69°F Clear</Weather>
          <TrayIcon><ChevronUp size={22} strokeWidth={1.4}/></TrayIcon>
          <TrayIcon><Svg w={18} h={24}><rect x="1" y="5" width="10" height="14" rx="2" stroke="#fff" strokeWidth="1.2"/><path d="M12 9l4-2v10l-4-2M3 2h6M3 22h6" stroke="#fff" strokeWidth="1.2"/></Svg></TrayIcon>
          <TrayIcon><Svg w={24} h={24}><path d="M2 14a5 5 0 0 1 5-8 6 6 0 0 1 10 3v7H5z" fill="#b8b8b8"/><circle cx="15" cy="16" r="7" fill="#d81e2c"/><text x="12" y="20" fontSize="10" fill="#fff" fontFamily={ARIAL} fontWeight="bold">x</text></Svg></TrayIcon>
          <TrayIcon><Svg w={22} h={16}><rect x="1" y="1" width="18" height="14" stroke="#fff" strokeWidth="1.5"/><rect x="3" y="3" width="9" height="10" fill="#fff"/><rect x="19" y="5" width="2" height="6" fill="#fff"/></Svg></TrayIcon>
          <TrayIcon><Wifi size={21} strokeWidth={1.3} style={{ transform: 'rotate(-45deg)' }}/></TrayIcon>
          <TrayIcon><Svg w={20} h={20}><path d="M1 7h3l4-5v16l-4-5H1zM12 7l6 6M18 7l-6 6" stroke="#fff" strokeWidth="1.2"/></Svg></TrayIcon>
          <Clock><span>9:33 PM</span><span>10/18/2022</span></Clock>
          <Notify>
            <Svg w={20} h={26}><rect x="0" y="0" width="20" height="24" fill="#fff"/><path d="M3 6h14M3 11h14M3 16h14" stroke="#1b2a47" strokeWidth="1.5"/></Svg>
            <NotifyCount>1</NotifyCount>
          </Notify>
        </Tray>
      </Taskbar>

      <Dialog>
        <DlgTitle>
          <span>Setting</span>
          <DlgBtns>
            <Svg w={13} h={14}><path d="M0 7h13" stroke="#111" strokeWidth="1.2"/></Svg>
            <Svg w={13} h={14}><rect x=".5" y="1" width="12" height="12" stroke="#ccc"/></Svg>
            <Svg w={14} h={14}><path d="M1 1l12 12M13 1L1 13" stroke="#111" strokeWidth="1.1"/></Svg>
          </DlgBtns>
        </DlgTitle>
        <DlgMain>
          <Nav>
            <NavItem $h={26}>Device</NavItem>
            <NavItem $on $h={25}>Display</NavItem>
            <NavItem $h={27}>Project</NavItem>
            <NavMore />
          </Nav>
          <DlgContent>
            <Heading $mt={37} $ml={22}>Display direction</Heading>
            <Tiles>
              {tiles.map(([n, l, on]) => (
                <Tile key={n} $on={on}><TileNum>{n}</TileNum><TileLabel>{l}</TileLabel></Tile>
              ))}
            </Tiles>
            <Divider />
            <Heading $mt={31} $ml={21}>Character Encoding</Heading>
            <Select>iso-8859-1<SelectBtn /></Select>
          </DlgContent>
        </DlgMain>
        <DlgFooter>
          <DlgButton>OK</DlgButton>
          <DlgButton>Cancel</DlgButton>
        </DlgFooter>
      </Dialog>
    </Root>
  );
}
